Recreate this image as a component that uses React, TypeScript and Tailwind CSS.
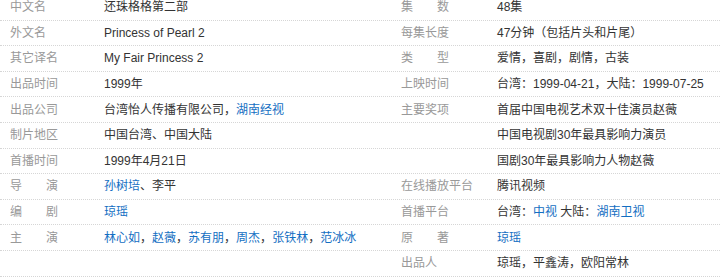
import React from "react";

type Seg = { t: string; link?: boolean };
type Cell = { label: string; value: Seg[] };

const L = (t: string): Seg => ({ t, link: true });
const T = (t: string): Seg => ({ t });

const left: Cell[] = [
  { label: "中文名", value: [T("还珠格格第二部")] },
  { label: "外文名", value: [T("Princess of Pearl 2")] },
  { label: "其它译名", value: [T("My Fair Princess 2")] },
  { label: "出品时间", value: [T("1999年")] },
  { label: "出品公司", value: [T("台湾怡人传播有限公司，"), L("湖南经视")] },
  { label: "制片地区", value: [T("中国台湾、中国大陆")] },
  { label: "首播时间", value: [T("1999年4月21日")] },
  { label: "导演", value: [L("孙树培"), T("、李平")] },
  { label: "编剧", value: [L("琼瑶")] },
  {
    label: "主演",
    value: [
      L("林心如"),
      T("，"),
      L("赵薇"),
      T("，"),
      L("苏有朋"),
      T("，"),
      L("周杰"),
      T("，"),
      L("张铁林"),
      T("，"),
      L("范冰冰"),
    ],
  },
  { label: "", value: [] },
];

const right: Cell[] = [
  { label: "集数", value: [T("48集")] },
  { label: "每集长度", value: [T("47分钟（包括片头和片尾）")] },
  { label: "类型", value: [T("爱情，喜剧，剧情，古装")] },
  { label: "上映时间", value: [T("台湾：1999-04-21，大陆：1999-07-25")] },
  { label: "主要奖项", value: [T("首届中国电视艺术双十佳演员赵薇")] },
  { label: "", value: [T("中国电视剧30年最具影响力演员")] },
  { label: "", value: [T("国剧30年最具影响力人物赵薇")] },
  { label: "在线播放平台", value: [T("腾讯视频")] },
  { label: "首播平台", value: [T("台湾："), L("中视"), T(" 大陆："), L("湖南卫视")] },
  { label: "原著", value: [L("琼瑶")] },
  { label: "出品人", value: [T("琼瑶，平鑫涛，欧阳常林")] },
];

function Label({ text }: { text: string }) {
  if (text.length === 2) {
    return (
      <span className="flex w-[48px] justify-between">
        <span>{text[0]}</span>
        <span>{text[1]}</span>
      </span>
    );
  }
  return <span>{text}</span>;
}

function Value({ segs }: { segs: Seg[] }) {
  return (
    <span className="whitespace-pre">
      {segs.map((s, i) =>
        s.link ? (
          <span key={i} className="text-[#136ec2]">
            {s.t}
          </span>
        ) : (
          <span key={i}>{s.t}</span>
        )
      )}
    </span>
  );
}

export default function App() {
  return (
    <div
      className="h-[280px] w-[720px] overflow-hidden bg-white text-[12px] text-[#333]"
      style={{ fontFamily: '"Liberation Sans", Arial, "Noto Sans CJK SC", sans-serif' }}
    >
      <div className="mt-[-5px] flex flex-col">
        {left.map((l, i) => {
          const r = right[i];
          return (
            <div
              key={i}
              className="flex h-[25.6px] items-center border-b border-dotted border-[#d6d6d6] leading-[24px]"
            >
              <div className="flex w-[360px] items-center">
                <div className="w-[104px] pl-[10px] text-[#999]">
                  <Label text={l.label} />
                </div>
                <Value segs={l.value} />
              </div>
              <div className="flex items-center">
                <div className="w-[137px] pl-[41px] text-[#999]">
                  <Label text={r.label} />
                </div>
                <Value segs={r.value} />
              </div>
            </div>
          );
        })}
      </div>
    </div>
  );
}
